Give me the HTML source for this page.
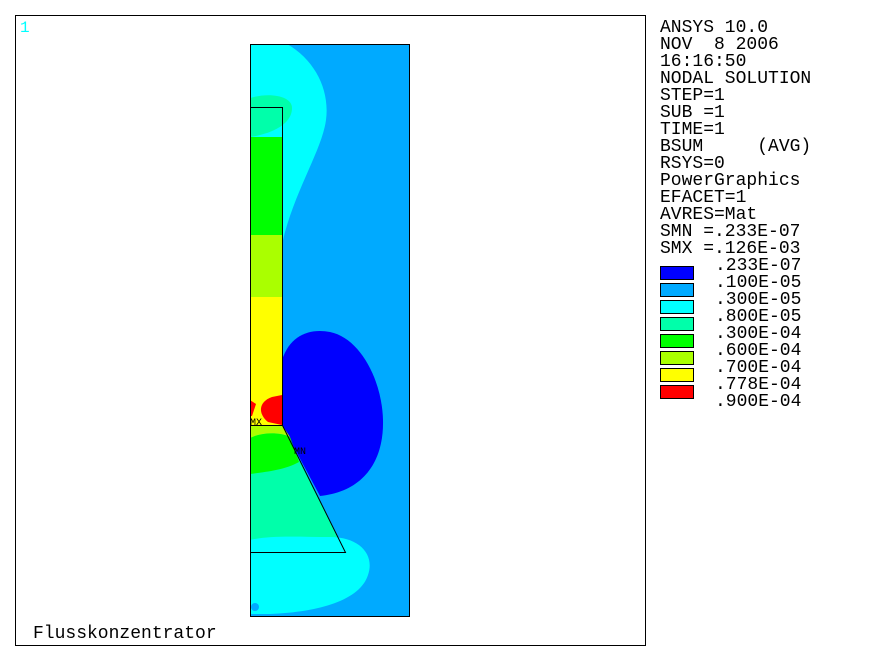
<!DOCTYPE html>
<html><head><style>
html,body{margin:0;padding:0;background:#fff;}
svg text{font-family:"Liberation Mono",monospace;font-size:18px;fill:#000;white-space:pre;}
</style></head><body>
<svg width="881" height="660" xmlns="http://www.w3.org/2000/svg" xml:space="preserve">
<rect x="0" y="0" width="881" height="660" fill="#fff"/>
<rect x="15.5" y="15.5" width="630" height="630" fill="#fff" stroke="#000" stroke-width="1"/>
<text x="20" y="32" style="fill:#00ffff;font-size:16px">1</text>
<defs><clipPath id="c"><rect x="250" y="44" width="159" height="572"/></clipPath></defs>
<g clip-path="url(#c)">
<rect x="250" y="44" width="159" height="572" fill="#00aaff"/>
<path d="M250,44 L287,44 C315,60 330,90 326,120 C322,150 295,190 283,240 L250,240 Z" fill="#00ffff"/>
<path d="M250,98 C270,92 292,96 292,108 C292,125 270,134 250,137 Z" fill="#00ffaa"/>
<rect x="250" y="137" width="32" height="98" fill="#00ff00"/>
<rect x="250" y="235" width="32" height="62" fill="#aaff00"/>
<rect x="250" y="297" width="32" height="128" fill="#ffff00"/>
<path d="M282,395 L272,397 C258,402 258,414 268,422 L282,425 Z" fill="#ff0000"/>
<path d="M250,400 L256,404 L252,416 L250,416Z" fill="#ff0000"/>
<path d="M282,360 C290,335 310,328 330,332 C360,338 382,380 383,420 C384,465 360,492 320,496 L282,425 Z" fill="#0000ff"/>
<path d="M250,425 L282,425 L345,552 L250,552 Z" fill="#00ffaa"/>
<path d="M250,425 L282,425 L290,437 C280,432 262,432 250,438 Z" fill="#aaff00"/>
<path d="M250,438 C262,432 280,432 290,437 L299,462 C285,470 265,472 250,474 Z" fill="#00ff00"/>
<path d="M250,540 C270,535 300,537 330,537 C360,537 375,555 368,575 C360,600 320,612 270,614 L250,614 Z" fill="#00ffff"/>
<circle cx="255" cy="607" r="4" fill="#00aaff"/>
</g>
<rect x="250.5" y="44.5" width="159" height="572" fill="none" stroke="#000" stroke-width="1"/>
<path d="M250.5,107.5 L282.5,107.5 L282.5,425.5 L345.5,552.5 L250.5,552.5" fill="none" stroke="#000" stroke-width="1"/>
<line x1="250" y1="425.5" x2="282" y2="425.5" stroke="#000"/>
<text x="250" y="425" style="font-size:10px">MX</text>
<text x="294" y="454" style="font-size:10px">MN</text>
<text x="33" y="638" style="font-size:18px">Flusskonzentrator</text>
<g>
<text x="660" y="32">ANSYS 10.0</text>
<text x="660" y="49">NOV  8 2006</text>
<text x="660" y="66">16:16:50</text>
<text x="660" y="83">NODAL SOLUTION</text>
<text x="660" y="100">STEP=1</text>
<text x="660" y="117">SUB =1</text>
<text x="660" y="134">TIME=1</text>
<text x="660" y="151">BSUM     (AVG)</text>
<text x="660" y="168">RSYS=0</text>
<text x="660" y="185">PowerGraphics</text>
<text x="660" y="202">EFACET=1</text>
<text x="660" y="219">AVRES=Mat</text>
<text x="660" y="236">SMN =.233E-07</text>
<text x="660" y="253">SMX =.126E-03</text>
<text x="715" y="270">.233E-07</text>
<text x="715" y="287">.100E-05</text>
<text x="715" y="304">.300E-05</text>
<text x="715" y="321">.800E-05</text>
<text x="715" y="338">.300E-04</text>
<text x="715" y="355">.600E-04</text>
<text x="715" y="372">.700E-04</text>
<text x="715" y="389">.778E-04</text>
<text x="715" y="406">.900E-04</text>
</g>
<g stroke="#000" stroke-width="1">
<rect x="660.5" y="266.5" width="33" height="13" fill="#0000ff"/>
<rect x="660.5" y="283.5" width="33" height="13" fill="#00aaff"/>
<rect x="660.5" y="300.5" width="33" height="13" fill="#00ffff"/>
<rect x="660.5" y="317.5" width="33" height="13" fill="#00ffaa"/>
<rect x="660.5" y="334.5" width="33" height="13" fill="#00ff00"/>
<rect x="660.5" y="351.5" width="33" height="13" fill="#aaff00"/>
<rect x="660.5" y="368.5" width="33" height="13" fill="#ffff00"/>
<rect x="660.5" y="385.5" width="33" height="13" fill="#ff0000"/>
</g>
</svg>
</body></html>
